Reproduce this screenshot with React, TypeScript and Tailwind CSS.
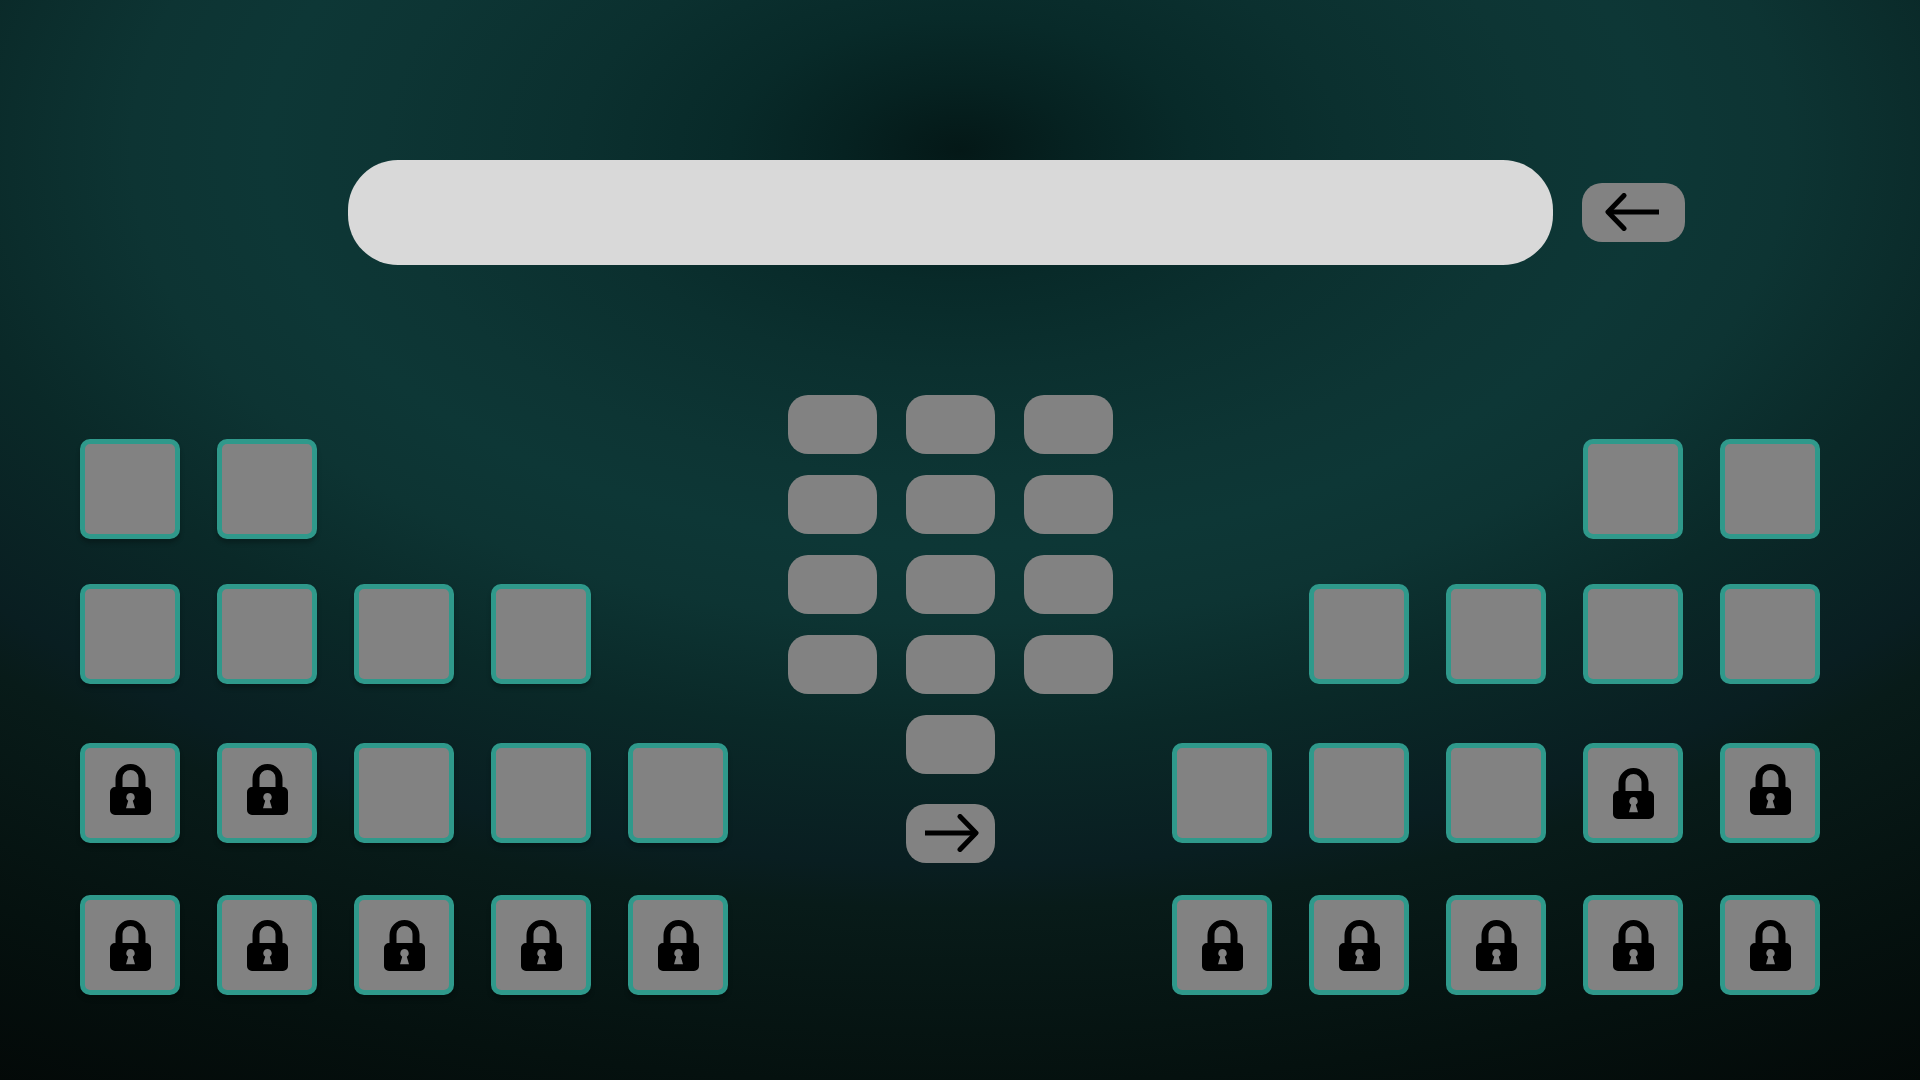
import React from "react";

type Slot = "open" | "locked" | "lockedHigh";

const leftRows: Slot[][] = [
  ["open", "open"],
  ["open", "open", "open", "open"],
  ["lockedHigh", "lockedHigh", "open", "open", "open"],
  ["locked", "locked", "locked", "locked", "locked"],
];

const rightRows: Slot[][] = [
  ["open", "open"],
  ["open", "open", "open", "open"],
  ["open", "open", "open", "locked", "lockedHigh"],
  ["locked", "locked", "locked", "locked", "locked"],
];

// Vertical distance of each tile row from the one above it.
const rowGap = ["", "mt-[45px]", "mt-[59px]", "mt-[52px]"];

function LockIcon() {
  return (
    <svg viewBox="0 0 41 51" className="h-[51px] w-[41px] shrink-0" aria-hidden="true">
      <path
        fill="#000"
        fillRule="evenodd"
        d="M5.5 23V15a15 15 0 0 1 30 0v8H36a5 5 0 0 1 5 5v18a5 5 0 0 1-5 5H5a5 5 0 0 1-5-5V28a5 5 0 0 1 5-5zM12.5 23h16V14a8 8 0 0 0-16 0zM20.5 29a4.2 4.2 0 0 0-2.3 7.7L16 44.3h9l-2.2-7.6A4.2 4.2 0 0 0 20.5 29z"
      />
    </svg>
  );
}

function ArrowIcon({ forward = false }: { forward?: boolean }) {
  return (
    <svg
      viewBox="0 0 54 38"
      className="h-[38px] w-[54px] shrink-0"
      fill="none"
      stroke="#000"
      strokeWidth="5"
      strokeLinejoin="round"
      aria-hidden="true"
    >
      <path strokeLinecap="round" d={forward ? "M35 2.5L51 19L35 35.5" : "M19 2.5L3 19L19 35.5"} />
      <path d={forward ? "M51 19H0" : "M3 19H54"} />
    </svg>
  );
}

function Tile({ slot, label, shadow }: { slot: Slot; label: string; shadow: boolean }) {
  return (
    <button
      type="button"
      aria-label={label}
      disabled={slot !== "open"}
      className={`flex size-[100px] shrink-0 items-center justify-center rounded-[10px] border-5 border-[#2f998b] bg-[#828282] ${
        slot === "lockedHigh" ? "pb-2" : ""
      } ${shadow ? "shadow-[0_4px_4px_rgba(0,0,0,0.25)]" : ""}`}
    >
      {slot !== "open" && <LockIcon />}
    </button>
  );
}

function TileBank({ rows, side }: { rows: Slot[][]; side: "left" | "right" }) {
  return (
    <section aria-label={`${side} tiles`} className="mt-11">
      {rows.map((row, r) => (
        <div key={r} className={`flex gap-[37px] ${side === "right" ? "justify-end" : ""} ${rowGap[r]}`}>
          {row.map((slot, c) => (
            <Tile key={c} slot={slot} shadow={side === "left"} label={`${side} tile ${r + 1}-${c + 1}`} />
          ))}
        </div>
      ))}
    </section>
  );
}

function Key({ label, className = "", children }: { label: string; className?: string; children?: React.ReactNode }) {
  return (
    <button
      type="button"
      aria-label={label}
      className={`flex h-[59px] w-[89px] items-center justify-center rounded-[20px] bg-[#828282] ${className}`}
    >
      {children}
    </button>
  );
}

export default function App() {
  return (
    <main className="min-h-screen bg-[#040807] bg-[radial-gradient(1925px_1100px_at_50%_150px,#041817_0%,#062221_6%,#082a29_12%,#0b302f_20%,#0d3534_30%,#0d3736_36%,#0d3433_43%,#0a2928_53%,#091e21_65%,#081b19_69%,#05110f_85%,#030807_100%)] pt-40 pr-[100px] pb-10 pl-20">
      <div className="grid grid-cols-[1fr_minmax(0,1205px)_1fr] items-center">
        <input
          type="text"
          aria-label="Entry"
          className="col-start-2 h-[105px] w-full rounded-[50px] bg-[#d9d9d9] px-12 text-4xl text-black outline-none"
        />
        <button
          type="button"
          aria-label="Back"
          className="ml-[29px] flex h-[59px] w-[103px] items-center justify-center rounded-[20px] bg-[#828282] pr-0.5 pb-px"
        >
          <ArrowIcon />
        </button>
      </div>

      <div className="mt-[130px] flex items-start justify-between">
        <TileBank rows={leftRows} side="left" />
        <section aria-label="Keypad" className="flex min-w-[325px] flex-col items-center">
          <div className="grid grid-cols-3 gap-x-[29px] gap-y-[21px]">
            {Array.from({ length: 12 }, (_, i) => (
              <Key key={i} label={`Key ${i + 1}`} />
            ))}
            <Key label="Key 13" className="col-start-2" />
          </div>
          <Key label="Next" className="mt-[30px] pb-px pl-[3px]">
            <ArrowIcon forward />
          </Key>
        </section>
        <TileBank rows={rightRows} side="right" />
      </div>
    </main>
  );
}
